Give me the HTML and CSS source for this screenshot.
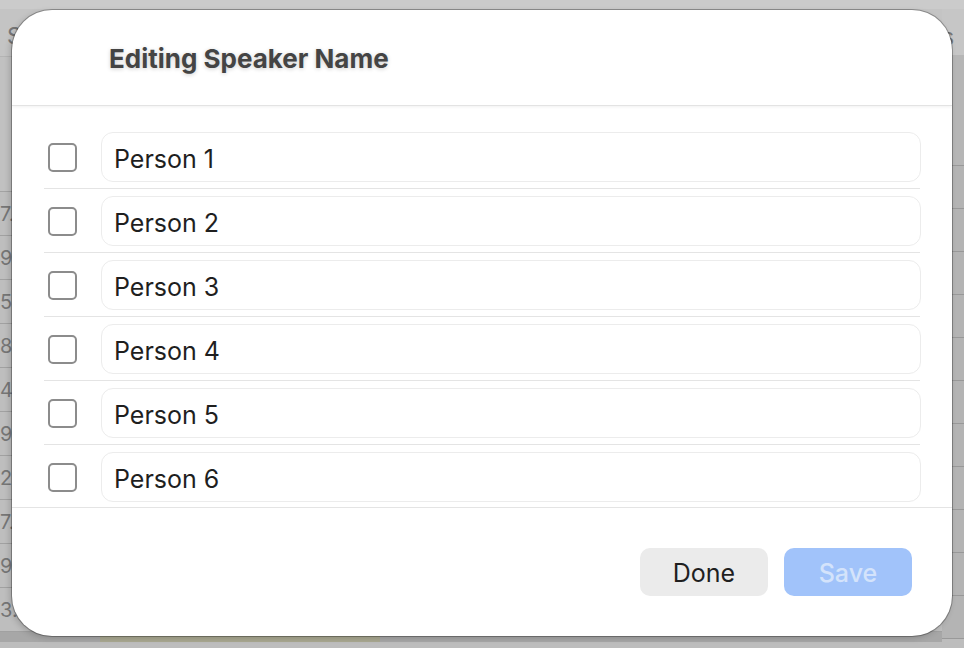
FILE: index.html
```html
<!DOCTYPE html>
<html lang="en">
<head>
<meta charset="utf-8">
<title>Editing Speaker Name</title>
<link rel="stylesheet" href="styles.css">
</head>
<body>
<div class="backdrop">
  <div class="topband"></div>
  <div class="panes">
    <div class="pane-left">
      <div class="thead"><span class="bg-text">S</span></div>
      <div class="tgap"></div>
      <div class="trow"><span class="bg-text">7.</span></div>
      <div class="trow"><span class="bg-text">9.</span></div>
      <div class="trow"><span class="bg-text">5.</span></div>
      <div class="trow"><span class="bg-text">8.</span></div>
      <div class="trow"><span class="bg-text">4.</span></div>
      <div class="trow"><span class="bg-text">9.</span></div>
      <div class="trow"><span class="bg-text">2.</span></div>
      <div class="trow"><span class="bg-text">7.</span></div>
      <div class="trow"><span class="bg-text">9.</span></div>
      <div class="trow"><span class="bg-text">3.4</span></div>
      <div class="trow last"><div class="hl-cell"></div></div>
    </div>
    <div class="pane-right">
      <div class="rhead"><span class="bg-text">s</span></div>
      <div class="rgap"></div>
      <div class="rrow"></div>
      <div class="rrow"></div>
      <div class="rrow"></div>
      <div class="rrow"></div>
      <div class="rrow"></div>
      <div class="rrow"></div>
      <div class="rrow"></div>
      <div class="rrow"></div>
      <div class="rrow"></div>
      <div class="rrow"></div>
      <div class="rrow"></div>
    </div>
  </div>
</div>

<div class="dialog">
  <header class="dialog-head">
    <h1 class="dialog-title">Editing Speaker Name</h1>
  </header>
  <div class="speaker-list">
    <div class="speaker-row"><span class="checkbox"></span><div class="name-field">Person 1</div></div>
    <div class="speaker-row"><span class="checkbox"></span><div class="name-field">Person 2</div></div>
    <div class="speaker-row"><span class="checkbox"></span><div class="name-field">Person 3</div></div>
    <div class="speaker-row"><span class="checkbox"></span><div class="name-field">Person 4</div></div>
    <div class="speaker-row"><span class="checkbox"></span><div class="name-field">Person 5</div></div>
    <div class="speaker-row"><span class="checkbox"></span><div class="name-field">Person 6</div></div>
  </div>
  <footer class="dialog-foot">
    <button class="btn btn-done">Done</button>
    <button class="btn btn-save">Save</button>
  </footer>
</div>
</body>
</html>
```
FILE: styles.css
```css
* { box-sizing: border-box; }
html, body {
  margin: 0;
  padding: 0;
  width: 964px;
  height: 648px;
  overflow: hidden;
  font-family: Inter, "Liberation Sans", sans-serif;
}
body { position: relative; background: #bdbdbd; }

/* ---------- dimmed app behind the sheet ---------- */
.backdrop {
  display: flex;
  flex-direction: column;
  height: 648px;
}
.topband { height: 9px; background: #cbcbcb; flex: none; }
.panes { display: flex; flex: 1; }
.pane-left { flex: 1; display: flex; flex-direction: column; }
.pane-right { width: 22px; display: flex; flex-direction: column; }

.bg-text {
  color: #767676;
  font-size: 20px;
  line-height: 1;
}
.thead {
  height: 48px;
  background: #c4c4c4;
  border-bottom: 1px solid #b4b4b4;
  padding: 16px 0 0 7px;
}
.thead .bg-text { font-size: 23px; }
.tgap {
  height: 135px;
  background: #c1c1c1;
  border-bottom: 1px solid #a3a3a3;
}
.trow {
  height: 44px;
  background: #bebebe;
  border-bottom: 1px solid #a1a1a1;
  display: flex;
  align-items: center;
  padding-left: 0;
}
.trow.last {
  height: 10px;
  background: #a7a7a7;
  border-bottom: none;
  align-items: stretch;
}
.hl-cell { margin-left: 100px; width: 280px; background: #a9a891; }

.rhead {
  height: 46px;
  background: #c6c6c6;
  padding: 17px 0 0 0;
}
.rhead .bg-text { font-size: 23px; }
.rgap { height: 111px; background: #b6b6b6; border-bottom: 1px solid #999; }
.rrow { height: 43px; background: #b4b4b4; border-bottom: 1px solid #999; flex: none; }

/* ---------- sheet ---------- */
.dialog {
  position: absolute;
  left: 12px;
  top: 10px;
  width: 940px;
  height: 626px;
  background: #ffffff;
  border-radius: 40px;
  box-shadow: 0 0 0 1px rgba(0, 0, 0, 0.28), -2px 2px 6px rgba(0, 0, 0, 0.18);
  display: flex;
  flex-direction: column;
  overflow: hidden;
}
.dialog-head {
  height: 96px;
  flex: none;
  display: flex;
  align-items: center;
  padding: 2px 0 0 97px;
  border-bottom: 1px solid #e3e3e3;
  box-shadow: 0 1px 3px rgba(0, 0, 0, 0.06);
  position: relative;
}
.dialog-title {
  margin: 0;
  font-size: 26px;
  font-weight: 700;
  color: #444444;
  letter-spacing: 0;
  text-shadow: 0 1px 4px rgba(0, 0, 0, 0.2);
}

.speaker-list {
  flex: none;
  padding: 19px 31px 0 32px;
  display: flex;
  flex-direction: column;
}
.speaker-row {
  display: flex;
  align-items: center;
  gap: 24px;
  padding: 7px 0 6px 4px;
  border-bottom: 1px solid #e4e4e4;
  margin-right: 1px;
}
.speaker-row:last-child {
  border-bottom: none;
  padding-bottom: 5px;
}
.speaker-row .name-field { margin-right: -1px; }
.checkbox {
  width: 29px;
  height: 29px;
  flex: none;
  border: 2px solid #8c8c8c;
  border-radius: 5px;
  background: #fff;
}
.name-field {
  flex: 1;
  height: 50px;
  border: 1.5px solid #ececec;
  border-radius: 12px;
  display: flex;
  align-items: center;
  padding: 3px 0 0 12px;
  font-size: 25px;
  color: #1f1f1f;
}

.dialog-foot {
  flex: 1;
  border-top: 1px solid #e4e4e4;
  display: flex;
  justify-content: flex-end;
  align-items: flex-start;
  gap: 16px;
  padding: 40px 40px 0 0;
}
.btn {
  width: 128px;
  height: 48px;
  border: none;
  border-radius: 10px;
  font-family: inherit;
  font-size: 25px;
  padding: 2px 0 0;
}
.btn-done { background: #ebebeb; color: #1f1f1f; }
.btn-save { background: #a1c3fa; color: #d4e3fb; font-weight: 500; }
```
